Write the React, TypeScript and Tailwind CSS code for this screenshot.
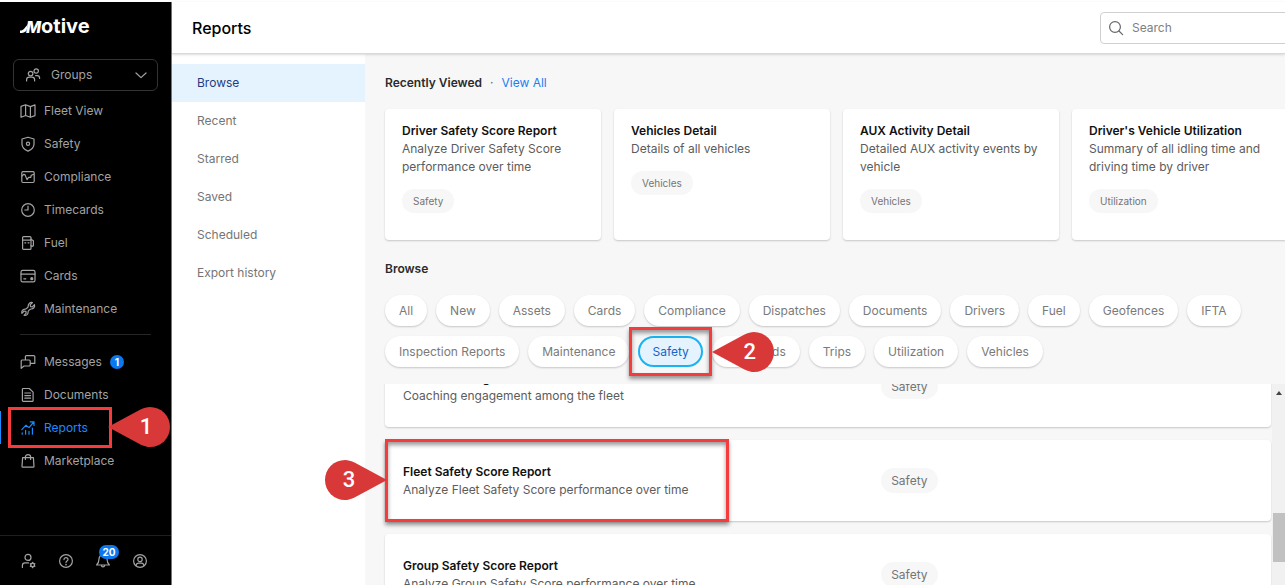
import type { ReactNode } from 'react';

type IconProps = { children: ReactNode; size?: string };

function Icon({ children, size = 'size-4' }: IconProps) {
  return (
    <svg
      viewBox="0 0 16 16"
      className={`${size} shrink-0`}
      fill="none"
      stroke="currentColor"
      strokeWidth="1.2"
      strokeLinecap="round"
      strokeLinejoin="round"
      aria-hidden="true"
    >
      {children}
    </svg>
  );
}

const icons = {
  groups: (
    <Icon>
      <circle cx="5.6" cy="6.6" r="2.3" />
      <circle cx="11.2" cy="4" r="2.2" />
      <path d="M1.6 14v-1.2c0-1.6 1.3-2.6 2.7-2.6h2.6c1.5 0 2.7 1 2.7 2.6V14M10.6 8.6h1.6c1.4 0 2.4.9 2.4 2.3v.6" />
    </Icon>
  ),
  map: (
    <Icon>
      <path d="M1 3.4 5.6 1.8l4.8 1.8L15 1.9v10.7l-4.6 1.7-4.8-1.8L1 14.2zM5.6 1.8v10.7M10.4 3.6v10.7" />
    </Icon>
  ),
  shield: (
    <Icon>
      <path d="M8 1.2 14 3v5.2c0 3.2-2.5 5.4-6 6.9-3.5-1.5-6-3.7-6-6.9V3z" />
      <circle cx="8" cy="7.8" r="1.6" />
    </Icon>
  ),
  compliance: (
    <Icon>
      <rect x="1.8" y="2.7" width="12.4" height="10.8" rx="1.2" />
      <path d="M2 7 3.6 5.4l1.4.2 2 5 1.6-2.2h2.2l.4-2.2 2.4-.8" />
    </Icon>
  ),
  clock: (
    <Icon>
      <circle cx="8" cy="8" r="6.3" />
      <path d="M8 4.2V8H4.8" />
    </Icon>
  ),
  fuel: (
    <Icon>
      <rect x="2.6" y="1.6" width="8.4" height="12.8" rx="1" />
      <path d="M2.8 5.2h8M4.8 7.8h1M8 7.8h1M11 4.2l2.4 1.6v4.8c0 .9-2.4.9-2.4 0" />
    </Icon>
  ),
  card: (
    <Icon>
      <rect x="1" y="2.4" width="14" height="11.4" rx="1.6" />
      <path d="M1 6.2h14M3.8 10.8h2" />
      <circle cx="11.8" cy="10.7" r="1" fill="currentColor" />
    </Icon>
  ),
  wrench: (
    <Icon>
      <path d="M12.4 1.6 10.2 3.9l.3 1.7 1.8.3 2.2-2.2c.6 2.3-.9 4.3-3.2 4.3-.7 0-1.2.2-1.7.7l-.9.9c-.5.5-.7 1-.6 1.7.1 2.2-2 3.7-4.1 3l2.2-2.2-.3-1.7-1.8-.4-2.2 2.3c-.7-2.2.9-4.2 3.1-4.2.7 0 1.2-.2 1.7-.7l.9-.9c.5-.5.6-1 .6-1.600 0-2.300 2-3.900 4.200-3.300z" />
    </Icon>
  ),
  messages: (
    <Icon>
      <path d="M5.4 6V2.6c0-.6.4-1 1-1h7.4c.6 0 1 .4 1 1v6.8h-4.6M2 6h7.2c.6 0 1 .4 1 1v4c0 .6-.4 1-1 1H4l-2.800 2.400V7c0-.6.3-1 .8-1z" />
    </Icon>
  ),
  document: (
    <Icon>
      <path d="M3.3 1.5h6l3.8 3.6v8.4c0 .5-.4.9-.9.9H3.3c-.5 0-.9-.4-.9-.9V2.4c0-.5.4-.9.9-.9zM4.8 6h5.8M4.8 8.6h5.8M4.8 11.2h5.8" />
    </Icon>
  ),
  chart: (
    <Icon>
      <path d="M1.8 9.6 6 5.2l3 2.4L13.8 2M10.2 1.8h3.8v3.6M2.2 12.8v1.4M5.6 10.4v3.8M9 11.4v2.8M12.4 8v6.2" />
    </Icon>
  ),
  bag: (
    <Icon>
      <path d="M2.6 4.6h10.8l.6 8.8c0 .5-.3.8-.8.8H2.8c-.5 0-.8-.3-.8-.8zM5.4 6.4V3.8c0-3 5.2-3 5.2 0v2.6" />
    </Icon>
  ),
  userCog: (
    <Icon>
      <circle cx="7" cy="4.4" r="3" />
      <path d="M1.4 14.4v-1.8c0-1.7 1.2-2.7 2.7-2.7h3.4" />
      <circle cx="11.6" cy="12" r="1.9" />
      <path d="M11.6 9.3v.8M11.6 13.9v.8M9.3 10.7l.7.4M13.2 12.9l.7.4M13.9 10.7l-.7.4M10 12.9l-.7.4" />
    </Icon>
  ),
  help: (
    <Icon>
      <circle cx="8" cy="8" r="6.4" />
      <path d="M6 6.6c0-2.7 4-2.6 4 0 0 1.500-2 1.500-2 3" />
      <circle cx="8" cy="11.6" r=".3" fill="currentColor" />
    </Icon>
  ),
  bell: (
    <Icon>
      <path d="M8 1.8c-2.6 0-4 1.9-4 4.2 0 2.800-.6 4.200-2.400 6h12.800c-1.800-1.800-2.400-3.200-2.400-6 0-2.300-1.400-4.200-4-4.200zM6.400 12.200c0 2.200 3.200 2.200 3.200 0" />
    </Icon>
  ),
  account: (
    <Icon>
      <circle cx="8" cy="8" r="6.4" />
      <circle cx="8" cy="6.4" r="2.2" />
      <path d="M4 12.6c.3-1.7 1.3-2.5 2.6-2.5h2.8c1.3 0 2.3.8 2.6 2.5" />
    </Icon>
  ),
};

const mainNav = [
  { label: 'Fleet View', icon: icons.map },
  { label: 'Safety', icon: icons.shield },
  { label: 'Compliance', icon: icons.compliance },
  { label: 'Timecards', icon: icons.clock },
  { label: 'Fuel', icon: icons.fuel },
  { label: 'Cards', icon: icons.card },
  { label: 'Maintenance', icon: icons.wrench },
];

const reportNav = ['Browse', 'Recent', 'Starred', 'Saved', 'Scheduled', 'Export history'];

const recentReports = [
  {
    title: 'Driver Safety Score Report',
    description: 'Analyze Driver Safety Score performance over time',
    tag: 'Safety',
  },
  { title: 'Vehicles Detail', description: 'Details of all vehicles', tag: 'Vehicles' },
  {
    title: 'AUX Activity Detail',
    description: 'Detailed AUX activity events by vehicle',
    tag: 'Vehicles',
  },
  {
    title: "Driver's Vehicle Utilization",
    description: 'Summary of all idling time and driving time by driver',
    tag: 'Utilization',
  },
];

const categories = [
  'All',
  'New',
  'Assets',
  'Cards',
  'Compliance',
  'Dispatches',
  'Documents',
  'Drivers',
  'Fuel',
  'Geofences',
  'IFTA',
  'Inspection Reports',
  'Maintenance',
  'Safety',
  'Timecards',
  'Trips',
  'Utilization',
  'Vehicles',
];

const reports = [
  { title: 'Fleet Coaching', description: 'Coaching engagement among the fleet' },
  {
    title: 'Fleet Safety Score Report',
    description: 'Analyze Fleet Safety Score performance over time',
    step: 3,
  },
  {
    title: 'Group Safety Score Report',
    description: 'Analyze Group Safety Score performance over time',
  },
];

// Numbered teardrop marker, pointing left unless told otherwise
function StepPin({ step, right = false }: { step: number; right?: boolean }) {
  return (
    <span className="relative flex h-10 w-[62px] items-center">
      <svg viewBox="0 0 62 40" className="absolute inset-0 h-10 w-[62px]" aria-hidden="true">
        <path
          fill="#d93838"
          d={
            right
              ? 'M62 20 30 2.8C26 .9 23 0 20 0a20 20 0 0 0 0 40c3 0 6-.9 10-2.8z'
              : 'M0 20 32 2.8C36 .9 39 0 42 0a20 20 0 0 1 0 40c-3 0-6-.9-10-2.8z'
          }
        />
      </svg>
      <span
        className={`relative w-10 text-center font-['Roboto',sans-serif] text-[22px] leading-10 font-medium text-white ${right ? 'ml-1' : 'ml-[18px]'}`}
      >
        {step}
      </span>
    </span>
  );
}

function Logo() {
  return (
    <a href="#home" aria-label="Motive" className="flex h-6 items-baseline text-white">
      <svg viewBox="0 0 8 11" className="-mr-0.5 h-[11px] w-2" aria-hidden="true">
        <path d="M0 11V8.6c2.6.2 4-1.400 8-6.600L6.500 8.500C5 10.300 3 11.200 0 11z" fill="currentColor" />
      </svg>
      <span className="text-base leading-6 font-extrabold italic">M</span>
      <span className="text-xl leading-6 font-bold">otive</span>
    </a>
  );
}

function NavItem({
  label,
  icon,
  active = false,
  badge,
  children,
}: {
  label: string;
  icon: ReactNode;
  active?: boolean;
  badge?: number;
  children?: ReactNode;
}) {
  return (
    <li className="relative">
      <a
        href={`#${label.toLowerCase()}`}
        className={`flex h-[33px] items-center gap-2 ${active ? 'border-l border-[#1a8cff] pl-[19px] text-[#1a8cff]' : 'pl-5 text-[#a3a3a3]'}`}
      >
        {icon}
        {label}
        {badge && (
          <span className="flex size-[14px] items-center justify-center rounded-full bg-[#0b78f0] text-[10px] leading-none font-bold text-white">
            {badge}
          </span>
        )}
      </a>
      {children}
    </li>
  );
}

function Sidebar() {
  return (
    <aside className="flex w-[172px] shrink-0 flex-col border-r border-[#777] bg-black">
      <div className="px-5 pt-3">
        <Logo />
      </div>
      <button
        type="button"
        className="mx-[13px] mt-[21px] flex h-8 items-center gap-[10px] rounded-md border border-[#333] pr-2 pl-[11px] text-[#a3a3a3]"
      >
        {icons.groups}
        <span className="flex-1 text-left">Groups</span>
        <Icon>
          <path d="m3 6 5 4.6L13 6" />
        </Icon>
      </button>
      <nav className="mt-[3px]">
        <ul>
          {mainNav.map((item) => (
            <NavItem key={item.label} label={item.label} icon={item.icon} />
          ))}
        </ul>
        <hr className="mx-5 mt-[9px] mb-[10px] border-[#262626]" />
        <ul>
          <NavItem label="Messages" icon={icons.messages} badge={1} />
          <NavItem label="Documents" icon={icons.document} />
          <NavItem label="Reports" icon={icons.chart} active>
            <div className="absolute -inset-y-1 left-2 z-20 w-[104px] border-[3px] border-[#f53b3b]" />
            <div className="absolute -top-1 left-[108px] z-20">
              <StepPin step={1} />
            </div>
          </NavItem>
          <NavItem label="Marketplace" icon={icons.bag} />
        </ul>
      </nav>
      <div className="mt-auto flex h-[50px] items-center gap-[21px] border-t border-[#1f1f1f] pl-[21px] text-[#a3a3a3]">
        <button type="button" aria-label="Admin">
          {icons.userCog}
        </button>
        <button type="button" aria-label="Help">
          {icons.help}
        </button>
        <button type="button" aria-label="Notifications" className="relative">
          {icons.bell}
          <span className="absolute -top-2 left-1 flex h-[14px] w-5 items-center justify-center rounded-full bg-[#0b78f0] text-[10px] leading-none font-bold text-white">
            20
          </span>
        </button>
        <button type="button" aria-label="Account">
          {icons.account}
        </button>
      </div>
    </aside>
  );
}

function ReportText({ title, description }: { title: string; description: string }) {
  return (
    <>
      <h3 className="font-semibold text-[#111]">{title}</h3>
      <p className="text-[#5c5c5c]">{description}</p>
    </>
  );
}

export default function App() {
  return (
    <div className="flex h-screen overflow-hidden bg-white pt-0.5 font-['Inter','Liberation_Sans',sans-serif] text-xs leading-[18px]">
      <Sidebar />
      <div className="flex min-w-0 flex-1 flex-col">
        <header className="z-10 flex h-[52px] shrink-0 items-center justify-between border-b border-[#d9d9d9] bg-white pl-5 shadow-sm">
          <h1 className="text-base font-medium text-black">Reports</h1>
          <label className="-mr-2 flex h-8 w-[193px] items-center gap-2 rounded border border-[#d0d0d0] px-[7px] text-[#666]">
            <Icon>
              <circle cx="7" cy="7" r="5.4" />
              <path d="m11 11 3.6 3.6" />
            </Icon>
            <input
              type="search"
              placeholder="Search"
              aria-label="Search"
              className="w-full min-w-0 outline-none placeholder:text-[#808080]"
            />
          </label>
        </header>

        <div className="flex min-h-0 flex-1">
          <nav className="w-[193px] shrink-0 bg-white pt-[10px]">
            {reportNav.map((item) => (
              <a
                key={item}
                href={`#${item}`}
                className={`flex h-[38px] items-center pl-[25px] ${item === 'Browse' ? 'bg-[#e5f3ff] text-[#253b80]' : 'text-[#757575]'}`}
              >
                {item}
              </a>
            ))}
          </nav>

          <main className="flex min-w-0 flex-1 flex-col bg-[#f7f7f7] pt-5 pl-5">
            <div className="flex gap-2">
              <h2 className="font-semibold text-[#2b2b2b]">Recently Viewed</h2>
              <span className="text-[#666]">·</span>
              <a href="#all" className="text-[#1a7ff0]">
                View All
              </a>
            </div>

            <div className="mt-[17px] flex gap-[13px]">
              {recentReports.map((report) => (
                <article
                  key={report.title}
                  className="h-[131px] w-[216px] shrink-0 rounded bg-white px-[17px] pt-[13px] shadow-[0_1px_2px_rgba(0,0,0,0.2)]"
                >
                  <ReportText title={report.title} description={report.description} />
                  <span className="mt-[13px] inline-block h-6 rounded-full bg-[#f7f7f7] px-[11px] text-[10px] leading-6 text-[#757575]">
                    {report.tag}
                  </span>
                </article>
              ))}
            </div>

            <h2 className="mt-5 font-semibold text-[#2b2b2b]">Browse</h2>

            <div className="mt-[17px] flex flex-wrap gap-x-[9px] gap-y-[10px] pr-5">
              {categories.map((category) => (
                <div key={category} className="relative">
                  <button
                    type="button"
                    className={`h-[31px] rounded-full px-[14px] ${category === 'Safety' ? 'bg-[#e5f3ff] text-[#1565c8] ring-2 ring-[#17b4f2] ring-inset' : 'bg-white text-[#7a7a7a] shadow-[0_1px_2px_rgba(0,0,0,0.2)]'}`}
                  >
                    {category}
                  </button>
                  {category === 'Safety' && (
                    <>
                      <div className="absolute -inset-x-[9px] -inset-y-[9px] z-10 border-[3px] border-[#f53b3b] shadow-[0_3px_4px_rgba(0,0,0,0.4),inset_0_3px_4px_rgba(0,0,0,0.4)]" />
                      <div className="absolute -top-1 left-full z-10 ml-[9px]">
                        <StepPin step={2} />
                      </div>
                    </>
                  )}
                </div>
              ))}
            </div>

            <div className="mt-[17px] flex min-h-0 flex-1">
              {/* list is scrolled part way, so the first row is cut by the top edge */}
              <div className="-ml-[60px] min-w-0 flex-1 overflow-hidden pl-[60px]">
                <ul className="-mt-[38px] flex flex-col gap-[13px] pr-px">
                  {reports.map((report) => (
                    <li
                      key={report.title}
                      className="relative flex h-[81px] shrink-0 items-center rounded bg-white shadow-[0_1px_2px_rgba(0,0,0,0.2)]"
                    >
                      <div className="w-[56%] pl-[18px]">
                        <ReportText title={report.title} description={report.description} />
                      </div>
                      <span className="h-[25px] rounded-full bg-[#f7f7f7] px-[10px] leading-[25px] text-[#757575]">
                        Safety
                      </span>
                      {report.step && (
                        <>
                          <div className="absolute -inset-y-px left-0 w-[344px] border-[3px] border-[#f53b3b] shadow-[0_3px_4px_rgba(0,0,0,0.4),inset_0_3px_4px_rgba(0,0,0,0.4)]" />
                          <div className="absolute top-5 right-full -mr-0.5">
                            <StepPin step={report.step} right />
                          </div>
                        </>
                      )}
                    </li>
                  ))}
                </ul>
              </div>
              <div className="flex w-[13px] shrink-0 flex-col items-end bg-[#f1f1f1]" aria-hidden="true">
                <svg viewBox="0 0 13 17" className="h-[17px] w-[13px]">
                  <path d="M4 11 7 7l3 4z" fill="#444" />
                </svg>
                <div className="mt-28 h-[49px] w-3 bg-[#c1c1c1]" />
              </div>
            </div>
          </main>
        </div>
      </div>
    </div>
  );
}
